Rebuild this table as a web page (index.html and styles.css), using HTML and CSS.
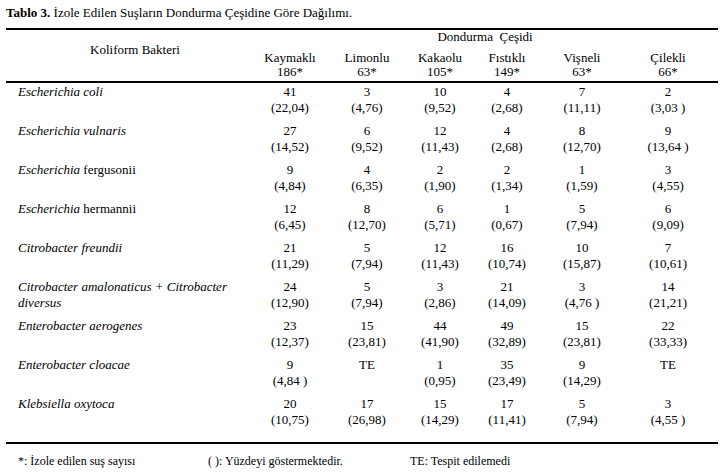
FILE: index.html
```html
<!DOCTYPE html>
<html>
<head>
  <meta charset="utf-8">
  <link rel="stylesheet" href="styles.css">
</head>
<body>
  <p class="caption"><b>Tablo 3.</b> İzole Edilen Suşların Dondurma Çeşidine Göre Dağılımı.</p>

  <table class="strain-table">
    <colgroup>
      <col class="col-label">
      <col class="col-kaymakli">
      <col class="col-limonlu">
      <col class="col-kakaolu">
      <col class="col-fistikli">
      <col class="col-visneli">
      <col class="col-cilekli">
    </colgroup>
    <thead>
      <tr class="head-top">
        <th class="head-label" rowspan="2">Koliform Bakteri</th>
        <th colspan="6">Dondurma&nbsp; Çeşidi</th>
      </tr>
      <tr class="head-cols">
        <th>Kaymaklı<br>186*</th>
        <th>Limonlu<br>63*</th>
        <th>Kakaolu<br>105*</th>
        <th>Fıstıklı<br>149*</th>
        <th>Vişneli<br>63*</th>
        <th class="last">Çilekli<br>66*</th>
      </tr>
    </thead>
    <tbody>
      <tr>
        <td class="name"><i>Escherichia coli</i></td>
        <td>41<br>(22,04)</td>
        <td>3<br>(4,76)</td>
        <td>10<br>(9,52)</td>
        <td>4<br>(2,68)</td>
        <td>7<br>(11,11)</td>
        <td class="last">2<br>(3,03 )</td>
      </tr>
      <tr>
        <td class="name"><i>Escherichia vulnaris</i></td>
        <td>27<br>(14,52)</td>
        <td>6<br>(9,52)</td>
        <td>12<br>(11,43)</td>
        <td>4<br>(2,68)</td>
        <td>8<br>(12,70)</td>
        <td class="last">9<br>(13,64 )</td>
      </tr>
      <tr>
        <td class="name"><i>Escherichia</i> fergusonii</td>
        <td>9<br>(4,84)</td>
        <td>4<br>(6,35)</td>
        <td>2<br>(1,90)</td>
        <td>2<br>(1,34)</td>
        <td>1<br>(1,59)</td>
        <td class="last">3<br>(4,55)</td>
      </tr>
      <tr>
        <td class="name"><i>Escherichia</i> hermannii</td>
        <td>12<br>(6,45)</td>
        <td>8<br>(12,70)</td>
        <td>6<br>(5,71)</td>
        <td>1<br>(0,67)</td>
        <td>5<br>(7,94)</td>
        <td class="last">6<br>(9,09)</td>
      </tr>
      <tr>
        <td class="name"><i>Citrobacter freundii</i></td>
        <td>21<br>(11,29)</td>
        <td>5<br>(7,94)</td>
        <td>12<br>(11,43)</td>
        <td>16<br>(10,74)</td>
        <td>10<br>(15,87)</td>
        <td class="last">7<br>(10,61)</td>
      </tr>
      <tr>
        <td class="name"><i>Citrobacter amalonaticus + Citrobacter diversus</i></td>
        <td>24<br>(12,90)</td>
        <td>5<br>(7,94)</td>
        <td>3<br>(2,86)</td>
        <td>21<br>(14,09)</td>
        <td>3<br>(4,76 )</td>
        <td class="last">14<br>(21,21)</td>
      </tr>
      <tr>
        <td class="name"><i>Enterobacter aerogenes</i></td>
        <td>23<br>(12,37)</td>
        <td>15<br>(23,81)</td>
        <td>44<br>(41,90)</td>
        <td>49<br>(32,89)</td>
        <td>15<br>(23,81)</td>
        <td class="last">22<br>(33,33)</td>
      </tr>
      <tr>
        <td class="name"><i>Enterobacter cloacae</i></td>
        <td>9<br>(4,84 )</td>
        <td>TE</td>
        <td>1<br>(0,95)</td>
        <td>35<br>(23,49)</td>
        <td>9<br>(14,29)</td>
        <td class="last">TE</td>
      </tr>
      <tr class="row-end">
        <td class="name"><i>Klebsiella oxytoca</i></td>
        <td>20<br>(10,75)</td>
        <td>17<br>(26,98)</td>
        <td>15<br>(14,29)</td>
        <td>17<br>(11,41)</td>
        <td>5<br>(7,94)</td>
        <td class="last">3<br>(4,55 )</td>
      </tr>
    </tbody>
  </table>

  <div class="notes">
    <span>*: İzole edilen suş sayısı</span>
    <span>( ): Yüzdeyi göstermektedir.</span>
    <span>TE: Tespit edilemedi</span>
  </div>
</body>
</html>
```

FILE: styles.css
```css
body {
  margin: 0;
  padding: 5px 6px;
  background: #fff;
  color: #000;
  font-family: "Liberation Serif", "Times New Roman", Times, "Nimbus Roman", "Nimbus Roman No9 L", FreeSerif, "Noto Serif", "DejaVu Serif", Georgia, serif;
  font-size: 13px;
  line-height: 15px;
}

.caption {
  margin: 0 0 8px;
}

/* Table */
.strain-table {
  width: 712px;
  table-layout: fixed;
  border-collapse: separate;
  border-spacing: 0;
  font-family: inherit;
  font-size: 13px;
}

.col-label { width: 246px; }
.col-kaymakli { width: 76px; }
.col-limonlu { width: 78px; }
.col-kakaolu { width: 68px; }
.col-fistikli { width: 66px; }
.col-visneli { width: 84px; }
.col-cilekli { width: 94px; }

.strain-table th {
  font-weight: normal;
  text-align: center;
  padding: 0;
  line-height: 14px;
}

.head-top th {
  border-top: 2px solid #000;
  vertical-align: top;
}

.head-top .head-label {
  padding: 13px 0 0 12px;
  border-bottom: 2px solid #000;
}

.head-cols th {
  padding: 7px 0 2px;
  border-bottom: 2px solid #000;
}

.strain-table td {
  padding: 1px 0 6px;
  line-height: 16px;
  text-align: center;
  vertical-align: top;
}

.strain-table td.name {
  text-align: left;
  padding-left: 12px;
}

.strain-table .last {
  padding-right: 6px;
}

.row-end td {
  padding-bottom: 14px;
  border-bottom: 2px solid #000;
}

/* Footnotes */
.notes {
  display: grid;
  grid-template-columns: 190px 202px auto;
  margin-top: 10px;
  padding-left: 12px;
  font-size: 12px;
}
```
